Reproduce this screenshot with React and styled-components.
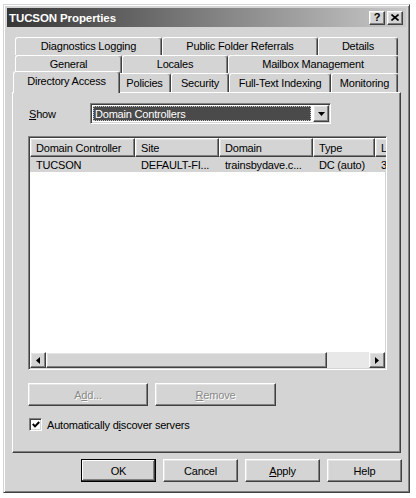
import React from 'react'
import styled, { createGlobalStyle, css } from 'styled-components'

const face = '#d4d4d4'

const GlobalStyle = createGlobalStyle`
  html, body {
    margin: 0;
    padding: 0;
    background: #fff;
  }
  body {
    font-family: "Liberation Sans", Arial, sans-serif;
    font-size: 11px;
    letter-spacing: -0.2px;
    color: #000;
  }
  * {
    box-sizing: border-box;
  }
`

const raised = css`
  background: ${face};
  border: 1px solid;
  border-color: #fff #404040 #404040 #fff;
  box-shadow: inset -1px -1px #808080, inset 1px 1px #e4e4e4;
`

const sunken = css`
  border: 1px solid;
  border-color: #808080 #fff #fff #808080;
  box-shadow: inset 1px 1px #404040, inset -1px -1px ${face};
`

const Window = styled.div`
  margin: 4px 0 0 3px;
  width: 407px;
  height: 489px;
  background: ${face};
  border: 1px solid;
  border-color: ${face} #404040 #404040 ${face};
  box-shadow: inset 1px 1px #fff, inset -1px -1px #808080;
  padding: 3px;
  display: flex;
  flex-direction: column;
`

const TitleBar = styled.div`
  flex: none;
  height: 19px;
  display: flex;
  align-items: center;
  justify-content: space-between;
  padding: 0 3px 0 2px;
  background: linear-gradient(to right, #363636, #c8c8c8);
`

const Title = styled.span`
  color: #fff;
  font-weight: bold;
  font-size: 11.5px;
  letter-spacing: -0.1px;
`

const CaptionButtons = styled.div`
  display: flex;
  gap: 2px;
`

const CaptionButton = styled.div`
  ${raised};
  width: 16px;
  height: 14px;
  display: flex;
  align-items: center;
  justify-content: center;
  font-weight: bold;
  font-size: 11px;
  line-height: 1;
`

const TabArea = styled.div`
  margin: 10px 0 0 5px;
  width: 389px;
`

const TabRow = styled.div`
  display: flex;
  align-items: flex-end;
  height: ${p => p.$h}px;
  padding: 0 3px;
`

const Tab = styled.div`
  flex: none;
  width: ${p => p.$w + (p.$active ? 4 : 0)}px;
  height: ${p => (p.$active ? 'calc(100% + 3px)' : '100%')};
  margin: ${p => (p.$active ? '0 -2px -1px' : '0')};
  position: relative;
  z-index: ${p => (p.$active ? 2 : 0)};
  background: ${face};
  border-top: 1px solid #fff;
  border-left: 1px solid #fff;
  border-right: 1px solid #404040;
  box-shadow: inset -1px 0 #808080;
  border-radius: 3px 3px 0 0;
  display: flex;
  align-items: center;
  justify-content: center;
  padding-bottom: ${p => (p.$active ? 3 : 1)}px;
  white-space: nowrap;
`

const Panel = styled.div`
  height: 361px;
  background: ${face};
  border: 1px solid;
  border-color: #fff #404040 #404040 #fff;
  box-shadow: inset -1px -1px #808080;
  padding: 10px 0 0 15px;
  display: flex;
  flex-direction: column;
  align-items: flex-start;
`

const ShowRow = styled.div`
  display: flex;
  align-items: center;
  height: 21px;
`

const Label = styled.span`
  width: 62px;
  padding-left: 1px;
`

const Combo = styled.div`
  ${sunken};
  background: #fff;
  width: 241px;
  height: 21px;
  padding: 1px;
  display: flex;
`

const ComboValue = styled.div`
  flex: 1;
  margin: 1px 2px 1px 1px;
  background: #4a4a4a;
  color: #fff;
  border: 1px dotted #c8c8c8;
  padding-left: 1px;
  display: flex;
  align-items: center;
`

const DropButton = styled.div`
  ${raised};
  flex: none;
  width: 16px;
  height: 100%;
  display: flex;
  align-items: center;
  justify-content: center;
`

const List = styled.div`
  ${sunken};
  background: #fff;
  margin-top: 12px;
  width: 359px;
  height: 234px;
  padding: 1px;
  display: flex;
  flex-direction: column;
  overflow: hidden;
`

const HeaderRow = styled.div`
  flex: none;
  display: flex;
  height: 19px;
`

const HeaderCell = styled.div`
  ${raised};
  flex: none;
  width: ${p => p.$w}px;
  padding-left: 5px;
  display: flex;
  align-items: center;
  white-space: nowrap;
  overflow: hidden;
`

const DataRow = styled.div`
  flex: none;
  display: flex;
  height: 15px;
  background: ${face};
`

const DataCell = styled.div`
  flex: none;
  width: ${p => p.$w}px;
  padding-left: 6px;
  display: flex;
  align-items: center;
  white-space: nowrap;
  overflow: hidden;
`

const ListBody = styled.div`
  flex: 1;
`

const ScrollBar = styled.div`
  flex: none;
  height: 16px;
  display: flex;
`

const ScrollButton = styled.div`
  ${raised};
  flex: none;
  width: 16px;
  display: flex;
  align-items: center;
  justify-content: center;
`

const Thumb = styled.div`
  ${raised};
  flex: none;
  width: ${p => p.$w}px;
`

const Track = styled.div`
  flex: 1;
  background: #e8e8e8;
`

const ButtonRow = styled.div`
  display: flex;
  gap: ${p => p.$gap}px;
  margin-top: ${p => p.$top}px;
  justify-content: ${p => (p.$end ? 'flex-end' : 'flex-start')};
  padding-right: ${p => (p.$end ? 4 : 0)}px;
  align-self: stretch;
`

const PushButton = styled.div`
  ${raised};
  width: ${p => p.$w}px;
  height: 23px;
  display: flex;
  align-items: center;
  justify-content: center;
  color: ${p => (p.$disabled ? '#8a8a8a' : '#000')};
  text-shadow: ${p => (p.$disabled ? '1px 1px 0 #fff' : 'none')};
  ${p =>
    p.$default &&
    css`
      border-color: #000;
      box-shadow: inset -1px -1px #404040, inset 1px 1px #fff, inset -2px -2px #808080;
    `}
`

const CheckRow = styled.div`
  margin-top: 12px;
  display: flex;
  align-items: center;
  gap: 5px;
  padding-left: 1px;
`

const CheckBox = styled.div`
  ${sunken};
  background: #fff;
  width: 13px;
  height: 13px;
  display: flex;
  align-items: center;
  justify-content: center;
`

const tabRows = [
  { h: 18, tabs: [['Diagnostics Logging', 147], ['Public Folder Referrals', 156], ['Details', 80]] },
  { h: 18, tabs: [['General', 107], ['Locales', 106], ['Mailbox Management', 170]] },
  {
    h: 19,
    tabs: [
      ['Directory Access', 103, true],
      ['Policies', 53],
      ['Security', 58],
      ['Full-Text Indexing', 102],
      ['Monitoring', 67],
    ],
  },
]

const columns = [
  ['Domain Controller', 105, 'TUCSON'],
  ['Site', 84, 'DEFAULT-FI...'],
  ['Domain', 94, 'trainsbydave.c...'],
  ['Type', 62, 'DC (auto)'],
  ['L', 60, '3'],
]

const Arrow = ({ dir }) => {
  const pts = {
    down: '0,0 7,0 3.5,4',
    left: '4,0 4,7 0,3.5',
    right: '0,0 4,3.5 0,7',
  }[dir]
  const w = dir === 'down' ? 7 : 4
  const h = dir === 'down' ? 4 : 7
  return (
    <svg width={w} height={h} viewBox={`0 0 ${w} ${h}`}>
      <polygon points={pts} fill="#000" />
    </svg>
  )
}

const App = () => (
  <>
    <GlobalStyle />
    <Window>
      <TitleBar>
        <Title>TUCSON Properties</Title>
        <CaptionButtons>
          <CaptionButton>?</CaptionButton>
          <CaptionButton>
            <svg width="8" height="7" viewBox="0 0 8 7">
              <path d="M0.5 0.5 L7.5 6.5 M7.5 0.5 L0.5 6.5" stroke="#000" strokeWidth="1.6" />
            </svg>
          </CaptionButton>
        </CaptionButtons>
      </TitleBar>

      <TabArea>
        {tabRows.map((row, i) => (
          <TabRow key={i} $h={row.h}>
            {row.tabs.map(([label, w, active]) => (
              <Tab key={label} $w={w} $active={active}>
                {label}
              </Tab>
            ))}
          </TabRow>
        ))}

        <Panel>
          <ShowRow>
            <Label>
              <u>S</u>how
            </Label>
            <Combo>
              <ComboValue>Domain Controllers</ComboValue>
              <DropButton>
                <Arrow dir="down" />
              </DropButton>
            </Combo>
          </ShowRow>

          <List>
            <HeaderRow>
              {columns.map(([title, w]) => (
                <HeaderCell key={title} $w={w}>
                  {title}
                </HeaderCell>
              ))}
            </HeaderRow>
            <DataRow>
              {columns.map(([title, w, value]) => (
                <DataCell key={title} $w={w}>
                  {value}
                </DataCell>
              ))}
            </DataRow>
            <ListBody />
            <ScrollBar>
              <ScrollButton>
                <Arrow dir="left" />
              </ScrollButton>
              <Thumb $w={281} />
              <Track />
              <ScrollButton>
                <Arrow dir="right" />
              </ScrollButton>
            </ScrollBar>
          </List>

          <ButtonRow $gap={7} $top={13}>
            <PushButton $w={120} $disabled>
              A<u>d</u>d...
            </PushButton>
            <PushButton $w={121} $disabled>
              <u>R</u>emove
            </PushButton>
          </ButtonRow>

          <CheckRow>
            <CheckBox>
              <svg width="8" height="7" viewBox="0 0 8 7">
                <polyline points="0.8,3 3,5.4 7.2,1" fill="none" stroke="#000" strokeWidth="2" />
              </svg>
            </CheckBox>
            <span>
              Automatically d<u>i</u>scover servers
            </span>
          </CheckRow>
        </Panel>
      </TabArea>

      <ButtonRow $gap={7} $top={6} $end>
        <PushButton $w={75} $default>
          OK
        </PushButton>
        <PushButton $w={75}>Cancel</PushButton>
        <PushButton $w={75}>
          <u>A</u>pply
        </PushButton>
        <PushButton $w={75}>Help</PushButton>
      </ButtonRow>
    </Window>
  </>
)

export default App
